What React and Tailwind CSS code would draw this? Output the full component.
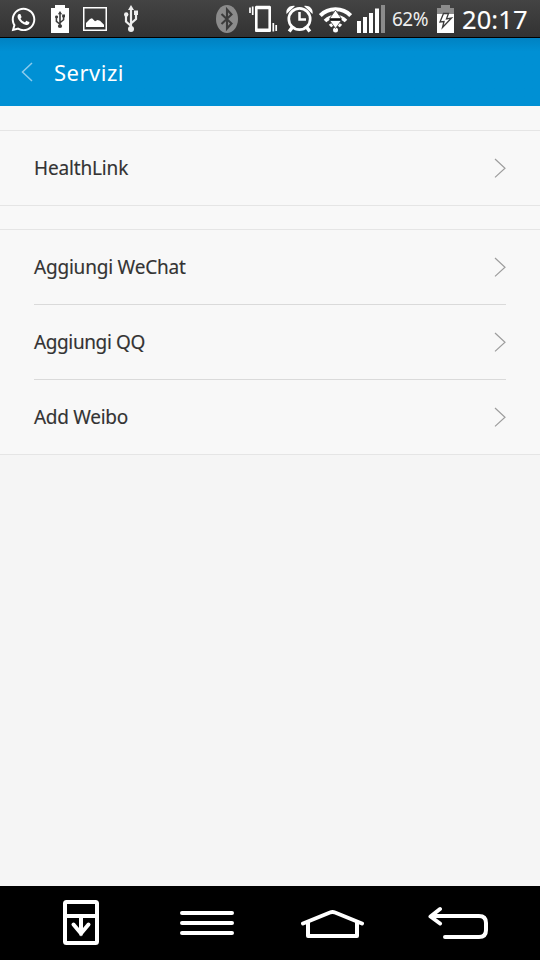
import React from "react";
import { FaWhatsapp } from "react-icons/fa";

function UsbMark({ x, y, w, h, color }) {
  return (
    <svg x={x} y={y} width={w} height={h} viewBox="0 0 14 27" preserveAspectRatio="none" fill="none" stroke={color} strokeWidth="2.2">
      <path d="M7 3v20M7 21L2 16.500v-6M7 18.500l5-4.500V8" />
      <path d="M7 0l3 5H4z" fill={color} stroke="none" />
      <circle cx="7" cy="24" r="3" fill={color} stroke="none" />
      <circle cx="2.200" cy="9.500" r="2.200" fill={color} stroke="none" />
      <path d="M10 5.500h4v4.500h-4z" fill={color} stroke="none" />
    </svg>
  );
}

function StatusBar() {
  return (
    <div className="flex h-[38px] items-start border-b border-black bg-linear-to-b from-[#444] to-[#323232] text-white">
      <FaWhatsapp className="mt-[6px] ml-[10px] h-[27px] w-[27px] shrink-0" />
      <svg className="ml-[14px] h-[37px] w-[18px] shrink-0" viewBox="51 0 18 37">
        <path d="M55 5h10v3h4v25H51V8h4z" fill="#fff" />
        <UsbMark x={55} y={11} w={10} h={17} color="#3c3c3c" />
      </svg>
      <svg className="ml-[14px] h-[37px] w-[24px] shrink-0" viewBox="83 0 24 37">
        <path d="M83.75 7.75h22.5v22.5h-22.5z" fill="none" stroke="#fff" strokeWidth="1.5" />
        <path d="M86 27v-4l4-4 2-.7 3 3 2.5-1.2 2.5.6 4 4V27z" fill="#fff" />
      </svg>
      <svg className="ml-[17px] h-[37px] w-[14px] shrink-0" viewBox="124 0 14 37">
        <UsbMark x={124} y={5} w={14} h={27} color="#eee" />
      </svg>
      <svg className="ml-[78px] h-[37px] w-[22px] shrink-0" viewBox="216 0 22 37">
        <ellipse cx="227" cy="19" rx="11" ry="14" fill="#8b8b8b" />
        <path d="M221.500 14l10 9.500-4.500 5V9.500l4.500 5-10 9.500" fill="none" stroke="#3b3b3b" strokeWidth="2.100" />
      </svg>
      <svg className="ml-[11px] h-[37px] w-[29px] shrink-0" viewBox="249 0 29 37" fill="none" stroke="#fff">
        <path d="M256.300 7.500h13.400v23h-13.400z" strokeWidth="2.6" />
        <path d="M256 7.500h14M256 30.200h14" strokeWidth="3.500" />
        <path d="M250 7.500v5.500M252.700 6.500v8.500M273.300 23v8.500M276.200 25v6" strokeWidth="1.700" />
      </svg>
      <svg className="ml-[8px] h-[37px] w-[27px] shrink-0" viewBox="286 0 27 37" fill="none" stroke="#fff">
        <circle cx="299.500" cy="19" r="10.700" strokeWidth="2.700" />
        <path d="M299.500 12v7.500h6.500" strokeWidth="2.500" />
        <path d="M292.500 27l-3.300 4.500M306.500 27l3.300 4.500" strokeWidth="3.500" />
        <path d="M286.500 14c-1-5 3-9 8.500-8zM312.500 14c1-5-3-9-8.500-8z" fill="#fff" stroke="none" />
      </svg>
      <svg className="ml-[6px] h-[37px] w-[33px] shrink-0" viewBox="319 0 33 37" fill="none" stroke="#fff">
        <path d="M320.300 15.500c8-8.300 22.400-8.300 30.400 0" strokeWidth="4" />
        <path d="M325 21c6-5.800 15-5.800 21 0" strokeWidth="3.700" />
        <path d="M330 26c3.300-3 7.700-3 11 0" strokeWidth="3.500" />
        <circle cx="335.500" cy="30" r="2.500" fill="#fff" stroke="none" />
        <path d="M335.500 10l5.800 8.500h-11.600zM329.700 20.500h11.600l-5.800 8z" fill="#fff" stroke="#444" strokeWidth=".8" />
        <path d="M329.500 19.500h12" stroke="#111" strokeWidth="1.800" />
      </svg>
      <svg className="ml-[5px] h-[37px] w-[28px] shrink-0" viewBox="357 0 28 37">
        <path d="M357 21h4v12h-4zM363 17h4v16h-4zM369 13h4v20h-4zM375 8.500h4V33h-4z" fill="#fff" />
        <path d="M381 5h4v28h-4z" fill="#8b8b8b" />
      </svg>
      <span className="ml-[7px] w-[44px] shrink-0 whitespace-nowrap font-['Noto_Sans',sans-serif] text-[19px] leading-[38px] tracking-[-0.5px] text-[#eee]">62%</span>
      <svg className="ml-[1px] h-[37px] w-[17px] shrink-0" viewBox="437 0 17 37">
        <path d="M441 5h9v3h4v6h-17V8h4z" fill="#8b8b8b" />
        <path d="M437 14h17v19h-17z" fill="#fff" />
        <path d="M443.500 13.500h5l-2 5.500 5-1-9 9.500 1.500-6-4 .5z" fill="#fff" stroke="#3b3b3b" strokeWidth="1.300" />
      </svg>
      <span className="ml-[8px] whitespace-nowrap font-['Noto_Sans',sans-serif] text-[25.5px] leading-[39px] tracking-[0.1px] [-webkit-text-stroke:0.1px]">20:17</span>
    </div>
  );
}

function Row({ label, tracking, frame }) {
  return (
    <div className={"mx-[34px] flex items-center justify-between " + frame}>
      <span className={"whitespace-nowrap font-['Noto_Sans',sans-serif] text-[19px] leading-6 text-[#333] [-webkit-text-stroke:0.15px] " + tracking}>{label}</span>
      <svg className="h-5 w-3" viewBox="0 0 12 20" fill="none" stroke="#9d9d9d" strokeWidth="1.200">
        <path d="M1 1l10 9.200L1 19.400" />
      </svg>
    </div>
  );
}

function NavBar() {
  return (
    <div className="flex h-[74px] bg-black">
      <svg className="ml-[63px] h-[74px] w-[36px]" viewBox="63 886 36 74" fill="none" stroke="#fff" strokeWidth="4" strokeLinecap="round">
        <rect x="65" y="902" width="32" height="41" rx="1.500" />
        <path d="M65 916h32M81 916v18M73.500 924.500l7.500 9 7.500-9" />
      </svg>
      <svg className="ml-[81px] h-[74px] w-[54px]" viewBox="180 886 54 74" stroke="#fff" strokeWidth="4" strokeLinecap="round">
        <path d="M182 913h50M182 923h50M182 933h50" />
      </svg>
      <svg className="ml-[67px] h-[74px] w-[63px]" viewBox="301 886 63 74" fill="none" stroke="#fff" strokeWidth="4" strokeLinecap="round" strokeLinejoin="round">
        <path d="M303 923.500l27-11q2.500-1 5 0l27 11M308 922v14h49v-14" />
      </svg>
      <svg className="ml-[64px] h-[74px] w-[61px]" viewBox="428 886 61 74" fill="none" stroke="#fff" strokeWidth="4" strokeLinecap="round" strokeLinejoin="round">
        <path d="M440 909l-9.500 7.500 9.500 7M432 916h47q7 0 7 7v7q0 7-7 7h-34" />
      </svg>
    </div>
  );
}

export default function App() {
  return (
    <div className="flex h-[960px] w-[540px] flex-col overflow-hidden bg-[#f5f5f5]">
      <StatusBar />
      <header className="flex h-[68px] items-center bg-[#0090d4] bg-linear-to-b from-[#0082c2] to-[#0090d4] to-20%">
        <svg className="ml-[21px] h-5 w-3" viewBox="0 0 12 20" fill="none" stroke="#8bcbec" strokeWidth="1.500">
          <path d="M11 1L1.500 10l9.500 9" />
        </svg>
        <h1 className="ml-[21px] font-['Noto_Sans',sans-serif] text-[22px] leading-8 tracking-[0.5px] text-white">Servizi</h1>
      </header>
      <main className="flex-1">
        <div className="bg-[#f8f8f8] pt-6">
          <section className="border-y border-[#e5e5e5]">
            <Row label="HealthLink" tracking="tracking-[-0.15px]" frame="h-[74px]" />
          </section>
          <section className="mt-[23px] border-y border-[#e5e5e5]">
            <Row label="Aggiungi WeChat" tracking="tracking-[-0.2px]" frame="h-[75px] border-b border-[#dadada]" />
            <Row label="Aggiungi QQ" tracking="tracking-[-0.38px]" frame="h-[75px] border-b border-[#dadada]" />
            <Row label="Add Weibo" tracking="tracking-[-0.3px]" frame="h-[74px]" />
          </section>
        </div>
      </main>
      <NavBar />
    </div>
  );
}
